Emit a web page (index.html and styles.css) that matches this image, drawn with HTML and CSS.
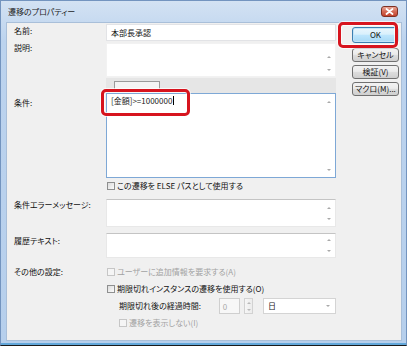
FILE: index.html
```html
<!DOCTYPE html>
<html lang="ja">
<head>
    <meta charset="UTF-8">
    <meta name="viewport" content="width=device-width, initial-scale=1.0">
    <title>遷移のプロパティー</title>
    <link rel="stylesheet" href="styles.css">
</head>
<body>
    <div class="window">
        <div class="titlebar">
            <span class="title">遷移のプロパティー</span>
            <span class="close-btn">
                <svg width="9" height="7" viewBox="0 0 9 7"><path d="M1.5 1 L7.5 6 M7.5 1 L1.5 6" stroke="#fff" stroke-width="1.8" stroke-linecap="round"/></svg>
            </span>
        </div>

        <div class="client">
            <div class="form">
                <!-- 名前 -->
                <div class="row row-name">
                    <div class="label">名前:</div>
                    <div class="field textbox">本部長承認</div>
                </div>

                <!-- 説明 -->
                <div class="row row-desc">
                    <div class="label">説明:</div>
                    <div class="field box desc-box">
                        <div class="box-body"></div>
                        <div class="scroll"><i class="arr up"></i><i class="arr down"></i></div>
                    </div>
                </div>

                <!-- 条件 -->
                <div class="row row-cond">
                    <div class="label">条件:</div>
                    <div class="field">
                        <div class="tab-strip"><span class="tab"></span></div>
                        <div class="box cond-box">
                            <div class="box-body cond-text">[金額]&gt;=1000000<span class="caret"></span></div>
                            <div class="scroll"><i class="arr up"></i><i class="arr down"></i></div>
                        </div>
                    </div>
                </div>

                <div class="row row-else">
                    <div class="label"></div>
                    <div class="field check"><span class="chk"></span>この遷移を ELSE パスとして使用する</div>
                </div>

                <!-- 条件エラーメッセージ -->
                <div class="row row-error">
                    <div class="label">条件エラーメッセージ:</div>
                    <div class="field box error-box">
                        <div class="box-body"></div>
                        <div class="scroll"><i class="arr up"></i><i class="arr down"></i></div>
                    </div>
                </div>

                <!-- 履歴テキスト -->
                <div class="row row-history">
                    <div class="label">履歴テキスト:</div>
                    <div class="field box history-box">
                        <div class="box-body"></div>
                        <div class="scroll"><i class="arr up"></i><i class="arr down"></i></div>
                    </div>
                </div>

                <!-- その他の設定 -->
                <div class="row row-other">
                    <div class="label">その他の設定:</div>
                    <div class="field other">
                        <div class="check disabled"><span class="chk"></span>ユーザーに追加情報を要求する(A)</div>
                        <div class="check check-expire"><span class="chk"></span>期限切れインスタンスの遷移を使用する(O)</div>
                        <div class="time-row">
                            <span class="time-label">期限切れ後の経過時間:</span>
                            <span class="spin-input">0</span>
                            <span class="spin-btns"><i class="arr up"></i><i class="arr down"></i></span>
                            <span class="select">日<i class="arr down"></i></span>
                        </div>
                        <div class="check disabled check-hide"><span class="chk"></span>遷移を表示しない(I)</div>
                    </div>
                </div>
            </div>

            <div class="buttons">
                <button class="btn btn-default">OK</button>
                <button class="btn btn-cancel">キャンセル</button>
                <button class="btn">検証(V)</button>
                <button class="btn">マクロ(M)...</button>
            </div>

            <div class="highlight hl-ok"></div>
            <div class="highlight hl-cond"></div>
        </div>
    </div>
</body>
</html>
```

FILE: styles.css
```css
/* Base */
* {
    box-sizing: border-box;
}

body {
    margin: 0;
    background: #fff;
    font-family: "Noto Sans CJK JP", "Noto Sans", sans-serif;
    font-size: 8px;
    line-height: 10px;
    color: #111;
    font-feature-settings: "palt";
}

/* Window frame */
.window {
    width: 407px;
    height: 346px;
    display: flex;
    flex-direction: column;
    padding: 0 4px 4px 5px;
    background: linear-gradient(#d3e2f3, #bcd3ee 40px, #b6cfec);
    border: 1px solid #7394bf;
    border-bottom-color: #1b1b1b;
    box-shadow: inset 0 -2px 0 #62a7da;
}

.titlebar {
    height: 21px;
    display: flex;
    align-items: center;
    justify-content: space-between;
    padding-left: 2px;
}

.title {
    color: #1c1c1c;
}

.close-btn {
    width: 17px;
    height: 11px;
    margin-right: 4px;
    display: flex;
    align-items: center;
    justify-content: center;
    border: 1px solid #7e3124;
    border-radius: 3px;
    background: linear-gradient(#e9a797, #d46a55 50%, #c3442e);
}

/* Client area */
.client {
    flex: 1;
    position: relative;
    display: flex;
    background: #f0f0f0;
    box-shadow: inset 0 0 0 1px #a9bfd9;
}

.form {
    width: 338px;
    padding: 2px 0 0 8px;
}

.row {
    display: flex;
}

.label {
    width: 92px;
    flex: none;
    color: #111;
}

.field {
    width: 230px;
}

/* Text boxes */
.textbox {
    height: 17px;
    padding: 3px 4px;
    background: #fff;
    border: 1px solid #e2e3e6;
}

.box {
    display: flex;
    background: #fff;
    border: 1px solid #d6d8dc;
}

.box-body {
    flex: 1;
}

.scroll {
    width: 12px;
    display: flex;
    flex-direction: column;
    align-items: center;
    justify-content: space-between;
    padding: 5px 0 4px;
}

.arr {
    display: block;
    width: 0;
    height: 0;
    border-left: 2px solid transparent;
    border-right: 2px solid transparent;
}

.arr.up {
    border-bottom: 2px solid #a9a9a9;
}

.arr.down {
    border-top: 2px solid #a9a9a9;
}

.row-name .label {
    padding-top: 2px;
}

.row-desc {
    margin-top: 2px;
}

.desc-box {
    height: 34px;
    border-color: #f2f2f2;
}

.desc-box .scroll {
    padding: 12px 0 5px;
}

.row-cond {
    margin-top: 1px;
}

.row-cond .label {
    padding-top: 20px;
}

.tab-strip {
    height: 15px;
    padding: 3px 0 0 8px;
    background: #e6e6e6;
}

.tab {
    display: block;
    width: 46px;
    height: 9px;
    border: 1px solid #9a9a9a;
    border-bottom: none;
    background: #f4f4f4;
}

.cond-box {
    height: 85px;
    border-color: #7ea8d6;
}

.cond-text {
    padding: 2px 4px;
    color: #222;
}

.caret {
    display: inline-block;
    width: 1px;
    height: 9px;
    margin-left: 1px;
    vertical-align: -1px;
    background: #000;
}

.cond-box .scroll {
    padding: 7px 0 6px;
}

/* Checkboxes */
.check {
    display: flex;
    align-items: center;
    height: 10px;
    padding-left: 1px;
    color: #111;
}

.chk {
    width: 8px;
    height: 8px;
    margin-right: 2px;
    flex: none;
    border: 1px solid #8e8f8f;
    background: linear-gradient(135deg, #dcdcdc, #fbfbfb);
}

.check.disabled {
    color: #a2a2a2;
}

.check.disabled .chk {
    border-color: #c6c6c6;
    background: #f5f5f5;
}

.row-else {
    margin-top: 3px;
}

.row-error {
    margin-top: 8px;
}

.row-error .label {
    padding-top: 1px;
}

.error-box {
    height: 28px;
    border-color: #c4c4c4 #e8e8e8 #e8e8e8;
}

.error-box .scroll {
    padding: 7px 0 6px;
}

.row-history {
    margin-top: 6px;
}

.row-history .label {
    padding-top: 3px;
}

.history-box {
    height: 25px;
    border-color: #c4c4c4 #e8e8e8 #e8e8e8;
}

.history-box .scroll {
    padding: 5px 0 5px;
}

.row-other {
    margin-top: 9px;
}

.check-expire {
    margin-top: 7px;
}

.time-row {
    display: flex;
    align-items: center;
    height: 16px;
    margin-top: 4px;
    padding-left: 13px;
}

.time-label {
    width: 119px;
}

.spin-input {
    width: 24px;
    height: 16px;
    padding: 3px 3px;
    color: #a9a9a9;
    border: 1px solid #cfcfcf;
    background: #f7f7f7;
}

.spin-btns {
    width: 10px;
    height: 16px;
    margin-left: 4px;
    display: flex;
    flex-direction: column;
    align-items: center;
    justify-content: space-around;
    border: 1px solid #d2d2d2;
    background: linear-gradient(90deg, #f6f6f6, #ececec);
}

.spin-btns .arr.up {
    border-bottom-color: #b9b9b9;
}

.spin-btns .arr.down {
    border-top-color: #b9b9b9;
}

.select {
    width: 85px;
    height: 16px;
    margin-left: 10px;
    display: flex;
    align-items: center;
    justify-content: space-between;
    padding: 0 5px 0 4px;
    border: 1px solid #d4d4d4;
    background: #fff;
    color: #222;
}

.check-hide {
    margin-top: 4px;
    padding-left: 13px;
}

/* Buttons */
.buttons {
    display: flex;
    flex-direction: column;
    gap: 3px;
    padding-top: 5px;
    margin-left: 8px;
}

.btn {
    width: 47px;
    height: 14px;
    padding: 0;
    font-family: inherit;
    font-size: 8px;
    line-height: 10px;
    font-feature-settings: "palt";
    color: #111;
    border: 1px solid #707070;
    border-radius: 3px;
    background: linear-gradient(#f2f2f2, #ebebeb 45%, #dddddd 50%, #cfcfcf);
}

.btn-default {
    height: 16px;
    border-color: #3c7fb1;
    background: linear-gradient(#eaf6fd, #d9f0fc 45%, #bee6fd 50%, #a7d9f5);
    box-shadow: inset 0 0 0 1px #c3e4f8;
}

.btn-cancel {
    margin-top: 2px;
}

/* Red highlight frames */
.highlight {
    position: absolute;
    border: 3px solid #d7141e;
    border-radius: 5px;
    box-shadow: 0 0 0 1px rgba(255, 255, 255, 0.7), inset 0 0 0 1px rgba(255, 255, 255, 0.7);
}

.hl-ok {
    left: 332px;
    top: 0;
    width: 60px;
    height: 26px;
}

.hl-cond {
    left: 95px;
    top: 67px;
    width: 89px;
    height: 27px;
}
```
